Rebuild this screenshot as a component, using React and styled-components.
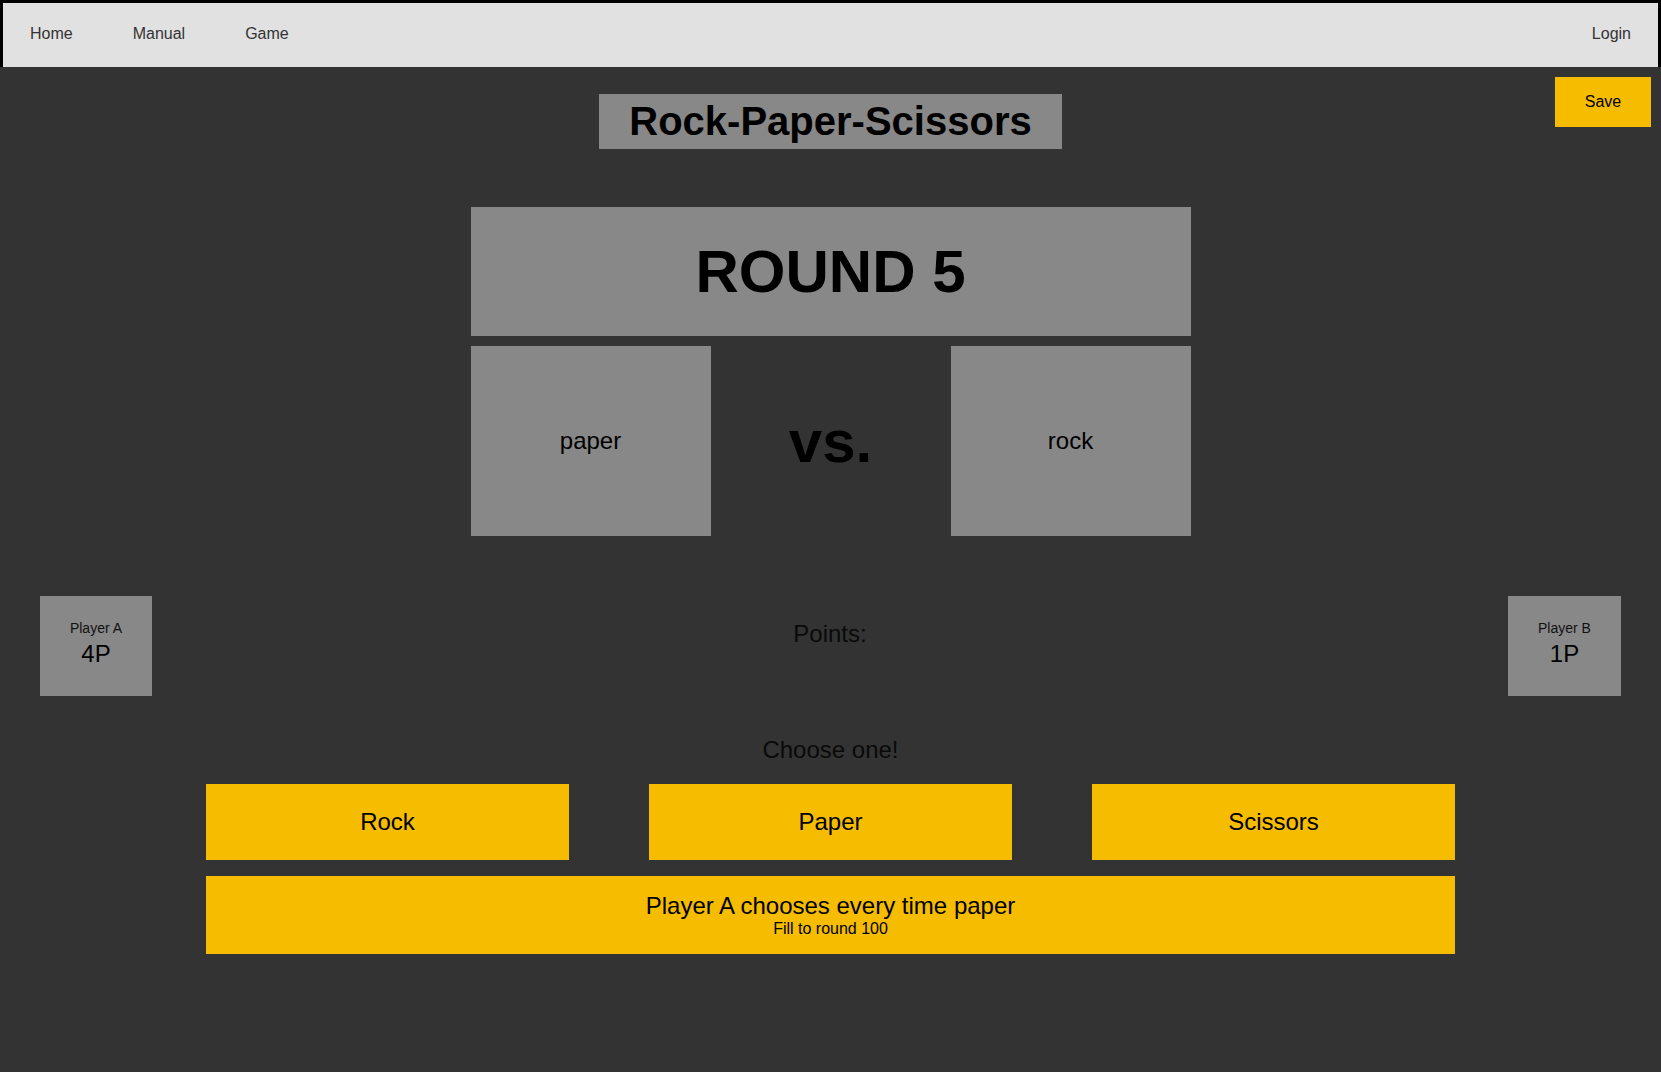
import styled, { createGlobalStyle } from 'styled-components'

const GlobalStyle = createGlobalStyle`
    *, *::before, *::after {
        box-sizing: border-box;
    }

    body {
        margin: 0;
        background: #333333;
        font-family: "Liberation Sans", Arial, sans-serif;
        color: #000;
    }
`

// navigation

const Nav = styled.nav`
    display: flex;
    align-items: center;
    gap: 60px;
    height: 67px;
    padding: 0 27px 2px 27px;
    border: 3px solid #000;
    border-bottom: none;
    background: #e1e1e1;
`

const NavLink = styled.a`
    color: #333;
    font-size: 16px;
    text-decoration: none;
    margin-left: ${props => (props.$end ? 'auto' : '0')};
`

// header

const Header = styled.header`
    display: grid;
    grid-template-columns: 1fr auto 1fr;
    align-items: start;
    padding: 10px 10px 0;
`

const Title = styled.h1`
    grid-column: 2 / 3;
    margin: 17px 0 0;
    padding: 4px 30px;
    background: #888888;
    font-size: 40px;
    font-weight: bold;
    line-height: 47px;
`

const SaveButton = styled.button`
    grid-column: 3 / 4;
    justify-self: end;
    width: 96px;
    height: 50px;
    border: none;
    background: #f5bc00;
    font-family: inherit;
    font-size: 16px;
    color: #000;
`

// board

const Board = styled.section`
    display: grid;
    grid-template-columns: repeat(3, 240px);
    row-gap: 10px;
    width: 720px;
    margin: 58px auto 0;
`

const RoundBanner = styled.div`
    grid-column: 1 / -1;
    display: flex;
    align-items: center;
    justify-content: center;
    height: 129px;
    background: #888888;
    font-size: 60px;
    font-weight: bold;
`

const Pick = styled.div`
    display: flex;
    align-items: center;
    justify-content: center;
    height: 190px;
    background: #888888;
    font-size: 24px;
`

const Versus = styled.div`
    display: flex;
    align-items: center;
    justify-content: center;
    font-size: 60px;
    font-weight: bold;
`

// score

const ScoreRow = styled.section`
    display: flex;
    align-items: flex-start;
    justify-content: space-between;
    margin-top: 60px;
    padding: 0 40px;
`

const PlayerBox = styled.div`
    display: flex;
    flex-direction: column;
    align-items: center;
    gap: 4px;
    width: ${props => props.$width}px;
    height: 100px;
    padding-top: 24px;
    background: #888888;
`

const PlayerName = styled.span`
    font-size: 14px;
    color: #111;
`

const PlayerScore = styled.span`
    font-size: 24px;
`

const Caption = styled.div`
    margin-top: ${props => props.$top}px;
    font-size: 24px;
    color: #0a0a0a;
    text-align: center;
`

// choices

const Choices = styled.section`
    display: grid;
    grid-template-columns: repeat(3, 1fr);
    column-gap: 80px;
    row-gap: 16px;
    width: 1249px;
    margin: 20px auto 0;
`

const ChoiceButton = styled.button`
    display: flex;
    flex-direction: column;
    align-items: center;
    justify-content: center;
    height: 76px;
    border: none;
    background: #f5bc00;
    font-family: inherit;
    font-size: 24px;
    color: #000;
`

const AutoButton = styled(ChoiceButton)`
    grid-column: 1 / -1;
    height: 78px;
`

const AutoHint = styled.span`
    font-size: 16px;
`

export default function App() {
    const round = 5
    const players = [
        { name: 'Player A', points: 4, width: 112 },
        { name: 'Player B', points: 1, width: 113 },
    ]

    return (
        <>
            <GlobalStyle />
            <Nav>
                <NavLink href="#">Home</NavLink>
                <NavLink href="#">Manual</NavLink>
                <NavLink href="#">Game</NavLink>
                <NavLink href="#" $end>Login</NavLink>
            </Nav>

            <Header>
                <Title>Rock-Paper-Scissors</Title>
                <SaveButton>Save</SaveButton>
            </Header>

            <Board>
                <RoundBanner>ROUND {round}</RoundBanner>
                <Pick>paper</Pick>
                <Versus>vs.</Versus>
                <Pick>rock</Pick>
            </Board>

            <ScoreRow>
                <PlayerBox $width={players[0].width}>
                    <PlayerName>{players[0].name}</PlayerName>
                    <PlayerScore>{players[0].points}P</PlayerScore>
                </PlayerBox>
                <Caption $top={24}>Points:</Caption>
                <PlayerBox $width={players[1].width}>
                    <PlayerName>{players[1].name}</PlayerName>
                    <PlayerScore>{players[1].points}P</PlayerScore>
                </PlayerBox>
            </ScoreRow>

            <Caption $top={40}>Choose one!</Caption>

            <Choices>
                <ChoiceButton>Rock</ChoiceButton>
                <ChoiceButton>Paper</ChoiceButton>
                <ChoiceButton>Scissors</ChoiceButton>
                <AutoButton>
                    Player A chooses every time paper
                    <AutoHint>Fill to round 100</AutoHint>
                </AutoButton>
            </Choices>
        </>
    )
}
